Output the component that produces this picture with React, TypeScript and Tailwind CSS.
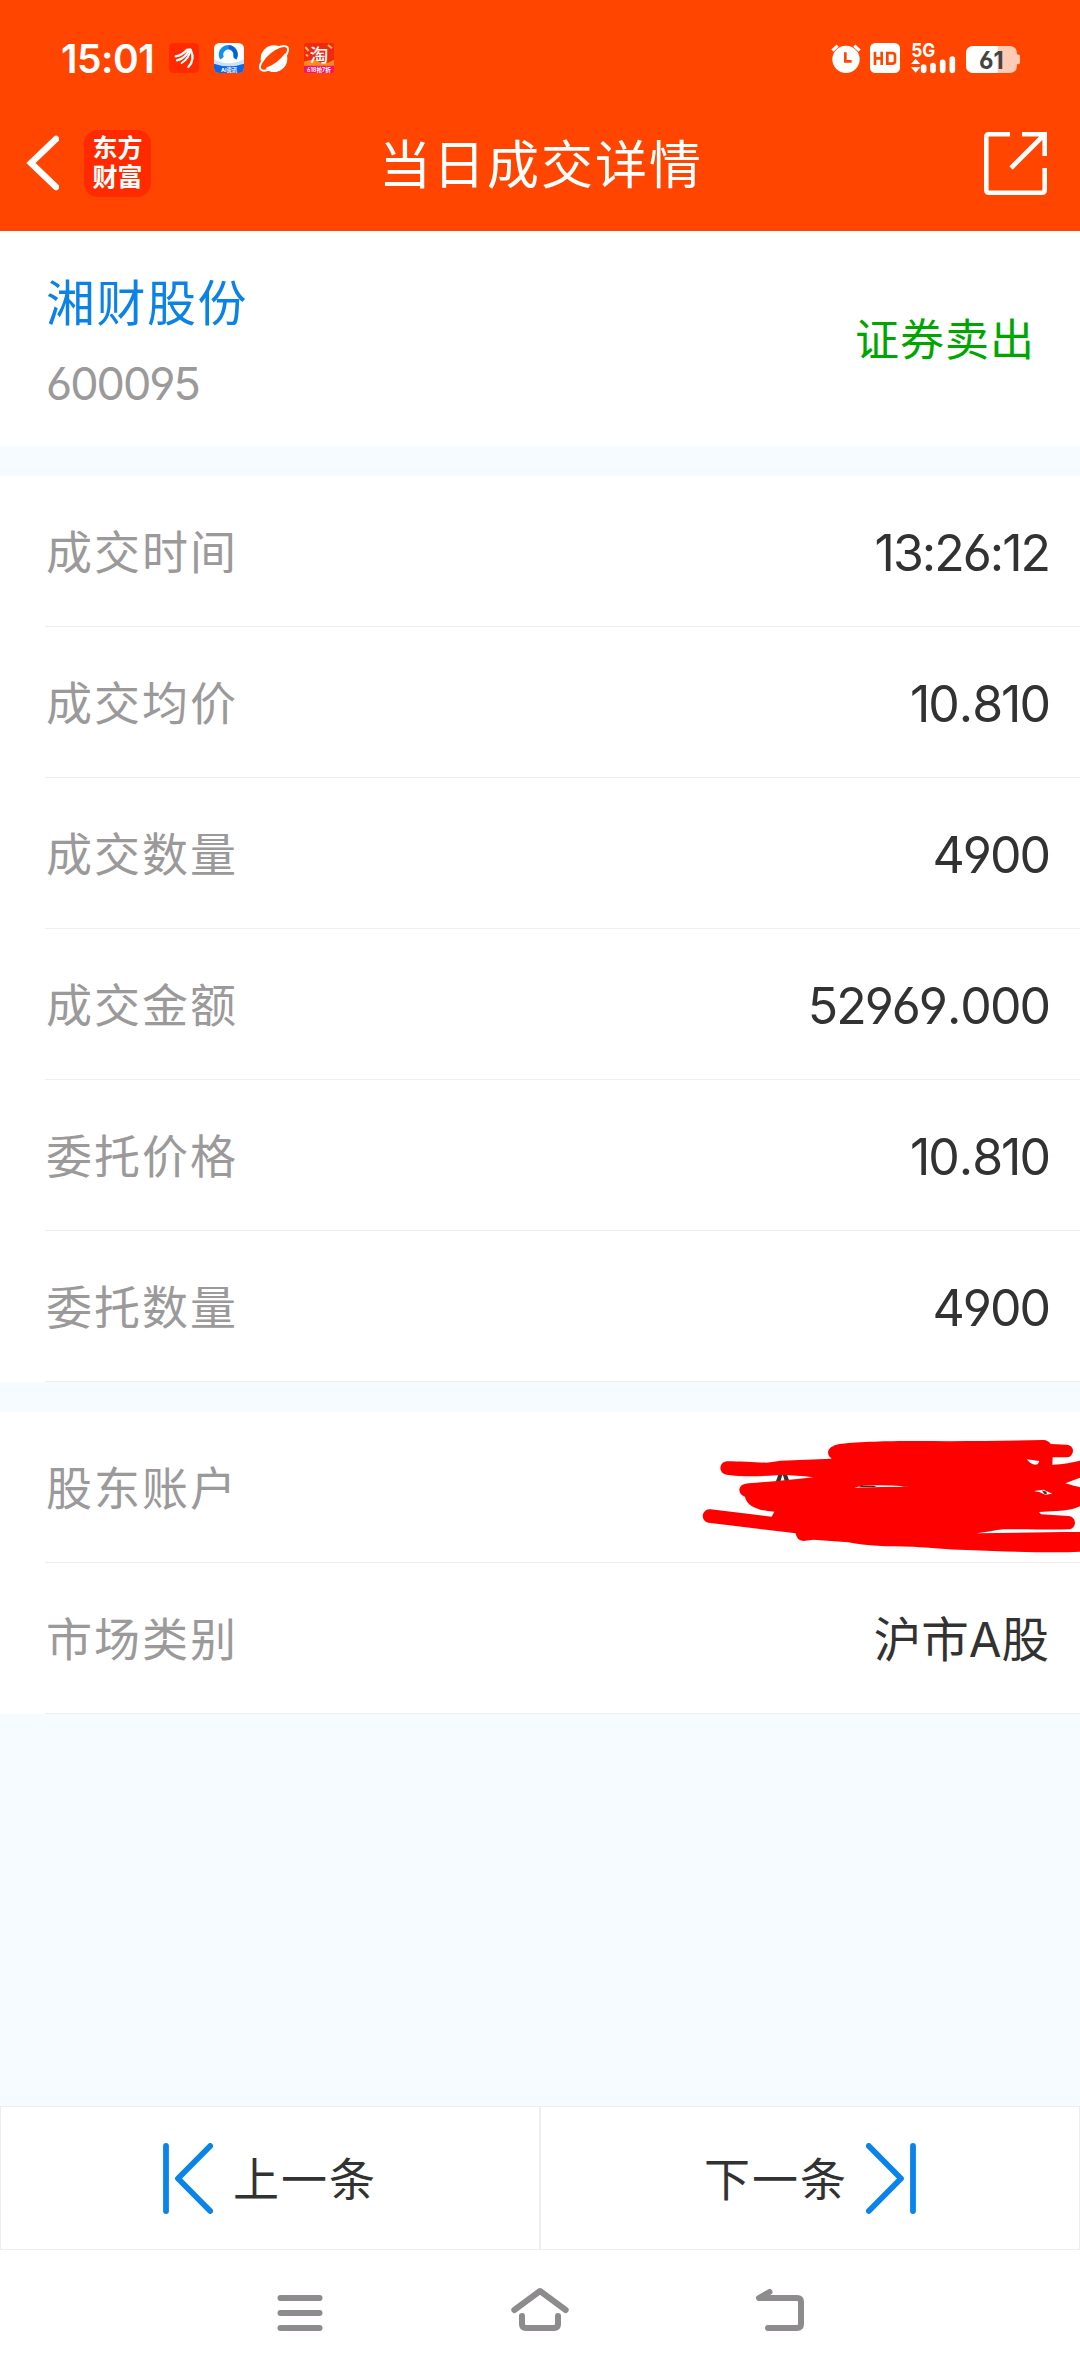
import clsx from 'clsx';

interface DetailItem {
  label: string;
  value: string;
  kind?: 'number' | 'text' | 'hidden';
}

const tradeItems: DetailItem[] = [
  { label: '成交时间', value: '13:26:12' },
  { label: '成交均价', value: '10.810' },
  { label: '成交数量', value: '4900' },
  { label: '成交金额', value: '52969.000' },
  { label: '委托价格', value: '10.810' },
  { label: '委托数量', value: '4900' },
];

const accountItems: DetailItem[] = [
  { label: '股东账户', value: 'A', kind: 'hidden' },
  { label: '市场类别', value: '沪市A股', kind: 'text' },
];

const StatusBar = () => (
  <div className="flex h-[116px] items-center pl-[61px] pr-[59px]">
    <span className="w-[108px] text-[39px] font-semibold leading-none tracking-[-0.5px]">15:01</span>

    <div className="flex flex-1 items-center gap-[15px]">
      {/* 东方财富 */}
      <svg width="30" height="30" viewBox="0 0 90 90">
        <rect width="90" height="90" rx="14" fill="#ff2a00" />
        <g fill="none" stroke="#fff" strokeLinecap="round">
          <path d="M20 40C32 38 42 34 54 20" strokeWidth="7" />
          <path d="M24 52C40 48 54 38 60 19" strokeWidth="7" />
          <path d="M38 60C54 50 62 38 64 20" strokeWidth="6" />
          <path d="M58 72C72 58 74 40 65 20" strokeWidth="7" />
        </g>
      </svg>
      {/* QQ browser */}
      <svg width="30" height="30" viewBox="0 0 90 90">
        <rect width="90" height="90" rx="16" fill="#fff" />
        <path d="M0 58Q45 76 90 58V74Q90 90 74 90H16Q0 90 0 74Z" fill="#1267e0" />
        <path d="M0 48Q45 74 90 48V62Q45 78 0 62Z" fill="#c8e2fb" />
        <path d="M24 46A22 22 0 1 1 62 46" fill="none" stroke="#1590f0" strokeWidth="14" />
        <path d="M44 12A23 23 0 0 1 62 46" fill="none" stroke="#0a5fd8" strokeWidth="11" />
        <path d="M28 54A10 10 0 0 1 34 38A13 13 0 0 1 58 40L60 54Z" fill="#fff" />
        <text x="45" y="86" fontSize="16" fontWeight="700" fill="#fff" textAnchor="middle">AI资讯</text>
      </svg>
      {/* planet */}
      <svg width="30" height="30" viewBox="0 0 90 90" className="overflow-visible">
        <circle cx="45" cy="47" r="40" fill="#fff" />
        <ellipse cx="45" cy="46" rx="48" ry="19" transform="rotate(-40 45 46)" fill="#ff4500" />
        <ellipse cx="45" cy="46" rx="52" ry="21" transform="rotate(-40 45 46)" fill="none" stroke="#fff" strokeWidth="6" />
        <path d="M20 75Q56 62 79 30Q90 62 62 82Q40 94 20 75Z" fill="#fff" />
      </svg>
      {/* 淘宝 */}
      <svg width="30" height="30" viewBox="0 0 90 90">
        <rect width="90" height="90" rx="8" fill="#f02a12" />
        <path d="M0 56Q30 44 45 56T90 50V70H0Z" fill="#ff8a1e" />
        <path d="M4 12L14 24M6 34L12 40M72 6L84 16" stroke="#ffc24a" strokeWidth="6" />
        <path d="M0 68H90V82Q90 90 82 90H8Q0 90 0 82Z" fill="#f0146e" />
        <text x="45" y="56" fontSize="56" fontWeight="500" fill="#fff" textAnchor="middle">淘</text>
        <text x="45" y="86" fontSize="17" fontWeight="600" fill="#fff" textAnchor="middle">618抢7折</text>
      </svg>
    </div>

    <div className="flex items-center">
      <svg width="30" height="30" viewBox="0 0 90 90" className="mr-[9px]">
        <circle cx="45" cy="49" r="41" fill="#fff" />
        <path d="M4 23L20 8M86 23L70 8" stroke="#fff" strokeWidth="9" />
        <path d="M43 28V55H62" fill="none" stroke="#ff4500" strokeWidth="8" />
      </svg>
      <svg width="30" height="30" viewBox="0 0 90 90" className="mr-[11px]">
        <rect width="90" height="90" rx="16" fill="#fff" />
        <path d="M15 26V66M35 26V66M15 46H35M52 30H66Q75 30 75 38V54Q75 62 66 62H52Z" fill="none" stroke="#ff4500" strokeWidth="8" />
      </svg>
      <svg width="46" height="30" viewBox="0 0 138 90" className="mr-[9px] overflow-visible">
        <text x="1" y="43" fontSize="58" fontWeight="700" fill="#fff" textLength="72" lengthAdjust="spacingAndGlyphs">5G</text>
        <path d="M0 63L14 47L28 63ZM0 73H28L14 89Z" fill="#fff" />
        <path d="M38 72V82M66 68V82M95 58V82M124 48V82" stroke="#fff" strokeWidth="17" strokeLinecap="round" />
      </svg>
      <svg width="55" height="30" viewBox="0 0 165 90" className="overflow-visible">
        <path d="M24 9H130Q153 9 153 32V34Q162 34 162 40V58Q162 64 153 64V67Q153 90 130 90H24Q0 90 0 66V32Q0 9 24 9Z" fill="#ffcbb5" />
        <path d="M24 9H95V90H24Q0 90 0 66V32Q0 9 24 9Z" fill="#fff" />
        <text x="76" y="77" fontSize="73" fontWeight="700" fill="#444" textAnchor="middle" textLength="74" lengthAdjust="spacingAndGlyphs">61</text>
      </svg>
    </div>
  </div>
);

const TitleBar = () => (
  <div className="grid h-[94px] grid-cols-[1fr_auto_1fr] items-center">
    <div className="flex items-center pl-[25px]">
      <svg width="34" height="56" viewBox="0 0 34 56" className="mr-[25px]">
        <path d="M31 4L6 28L31 52" fill="none" stroke="#fff" strokeWidth="6.5" strokeLinecap="round" />
      </svg>
      <div className="flex h-[67px] w-[67px] flex-col items-center justify-center rounded-[14px] bg-[#ff2a00] text-[25px] font-bold leading-[29px]">
        <span>东方</span>
        <span>财富</span>
      </div>
    </div>
    <h1 className="pl-[2px] pt-1.5 text-[52px] leading-none tracking-[2px]">当日成交详情</h1>
    <div className="flex justify-end pr-[33px]">
      <svg width="63" height="63" viewBox="0 0 63 63" fill="none" stroke="#fff" strokeWidth="4.6">
        <path d="M26 2.3H5Q2.3 2.3 2.3 5V58Q2.3 60.7 5 60.7H58Q60.7 60.7 60.7 58V36" />
        <path d="M38 2.3H60.7V24M60 3L27 36" />
      </svg>
    </div>
  </div>
);

const Scribble = () => (
  <svg className="absolute right-0 top-0" width="400" height="151" viewBox="0 36 1200 453">
    <path
      fill="#ff0000"
      d="M478 132C520 126 640 122 700 123C850 124 980 123 1090 120Q1105 121 1112 132L1160 134A19 19 0 0 1 1160 172L1118 172L1117 194C1150 193 1180 186 1200 182V233L1156 250C1175 256 1190 259 1200 262V319C1180 328 1160 332 1130 333L1077 336L1083 343L1165 348A20 20 0 0 1 1165 388C1100 390 1040 386 970 388C945 391 920 396 890 400C990 399 1100 396 1200 396V455C1120 460 1000 455 860 450C800 448 750 443 700 440C620 440 560 438 505 427L400 419L370 423Q350 422 347 400L85 368A20 20 0 0 1 92 328L275 350L283 335C240 333 200 320 195 290Q178 285 178 268Q180 252 205 250C270 245 330 240 400 232C350 225 310 225 290 226C230 230 180 230 140 224A20 20 0 0 1 142 184C180 184 230 188 260 188L302 182L455 176Q444 168 444 155Q447 138 478 132Z"
    />
    <path d="M1040 178L1078 183L1074 192Q1058 200 1040 178ZM522 263Q560 250 686 260Q600 260 522 263ZM1062 273L1090 269L1117 281L1096 284Q1080 275 1062 273Z" fill="#fff" />
    <path d="M536 262L544 257H582L590 261ZM662 259L672 257L684 260ZM1085 271L1100 275V283H1094Z" fill="#333" />
  </svg>
);

// the decimal point gets a little more room than the digits
const Amount = ({ value }: { value: string }) => {
  const [whole, fraction] = value.split('.');
  return (
    <>
      {whole}
      {fraction && <span className="ml-px mr-px">.</span>}
      {fraction}
    </>
  );
};

const DetailRow = ({ label, value, kind = 'number' }: DetailItem) => (
  <div className="relative h-[151px] bg-white pl-[45px]">
    <div className="flex h-full items-center justify-between border-b border-[#eeeeee] pl-px pr-[31px] pt-px">
      <span className="text-[46px] leading-none tracking-[2px] text-[#9b999a]">{label}</span>
      <span
        className={clsx(
          'pt-0.5 leading-none text-[#323232]',
          kind === 'number' && 'text-[50px] tracking-[-2px]',
          kind === 'text' && 'text-[47.5px]',
          kind === 'hidden' && 'mr-[249px] text-[50px]',
        )}
      >
        {kind === 'number' ? <Amount value={value} /> : value}
      </span>
    </div>
    {kind === 'hidden' && <Scribble />}
  </div>
);

const SkipIcon = ({ flip = false }: { flip?: boolean }) => (
  <svg
    width="50"
    height="71"
    viewBox="0 0 50 71"
    className={clsx(flip && '-scale-x-100')}
    fill="none"
    stroke="#0a84ea"
    strokeWidth="5.8"
    strokeLinecap="round"
    strokeLinejoin="round"
  >
    <path d="M3 3V68M47.2 3L15 35.5L47.2 68" />
  </svg>
);

const SystemNav = () => (
  <div className="flex h-[126px] items-center justify-center bg-white">
    <div className="flex w-60 justify-center">
      <svg width="60" height="60" fill="none" stroke="#8d8b8d" strokeWidth="6" strokeLinecap="round">
        <path d="M10.5 15H49.500M10.5 30H49.500M10.5 45H49.500" />
      </svg>
    </div>
    <div className="flex w-60 justify-center">
      <svg width="60" height="60" fill="none" stroke="#8d8b8d" strokeWidth="6" strokeLinecap="round" strokeLinejoin="round">
        <path d="M4.300 27L30 8L55.700 27M12 33V41Q12 45 16 45H44Q48 45 48 41V33" />
      </svg>
    </div>
    <div className="flex w-60 justify-center">
      <svg width="60" height="60" fill="none" stroke="#8d8b8d" strokeWidth="6" strokeLinecap="round" strokeLinejoin="round">
        <path d="M19.500 9L9 15H47Q51 15 51 19V41Q51 45 47 45H18" />
      </svg>
    </div>
  </div>
);

const App: React.FC = () => {
  return (
    <div className="flex h-[2376px] w-[1080px] flex-col overflow-hidden bg-[#f5fbff] font-['Inter','Noto_Sans_CJK_SC',sans-serif] [font-feature-settings:'cv03','cv04'] [font-kerning:none]">
      <header className="h-[231px] bg-[#ff4500] text-white">
        <StatusBar />
        <TitleBar />
      </header>

      <section className="mb-[30px] flex h-[215px] items-center justify-between bg-white pl-[46px] pr-[45px] pt-[3px]">
        <div className="flex flex-col gap-[33px] pt-[5px]">
          <h2 className="text-[49px] leading-none tracking-[1.500px] text-[#0b82e6]">湘财股份</h2>
          <span className="text-[45px] leading-none tracking-[-2px] text-[#9b999a]">600095</span>
        </div>
        <span className="text-[44px] leading-none tracking-[1px] text-[#00a600]">证券卖出</span>
      </section>

      <section className="mb-[30px]">
        {tradeItems.map((item) => (
          <DetailRow key={item.label} {...item} />
        ))}
      </section>

      <section>
        {accountItems.map((item) => (
          <DetailRow key={item.label} {...item} />
        ))}
      </section>

      <div className="mt-auto grid h-[144px] grid-cols-2 bg-white text-[46px] leading-none tracking-[2px] text-[#323232]">
        <button className="flex items-center justify-center gap-5 border border-[#eeeeee]">
          <SkipIcon />
          <span className="pt-0.5">上一条</span>
        </button>
        <button className="flex items-center justify-center gap-[18px] border border-[#eeeeee]">
          <span className="pt-0.5">下一条</span>
          <SkipIcon flip />
        </button>
      </div>
      <SystemNav />
    </div>
  );
};

export default App;
